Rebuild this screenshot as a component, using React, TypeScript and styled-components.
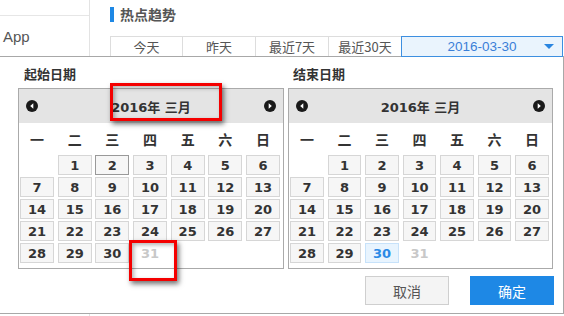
import React from "react";
import styled, { createGlobalStyle, css } from "styled-components";

const GlobalStyle = createGlobalStyle`
  html, body {
    margin: 0;
    padding: 0;
    background: #fff;
  }
  body {
    font-family: "Noto Sans", "Noto Sans CJK SC", sans-serif;
    color: #333;
  }
`;

const cjk = `"Noto Sans CJK SC", "Noto Sans", sans-serif`;
const calFont = `"DejaVu Sans", "Noto Sans CJK SC", sans-serif`;

const Page = styled.div`
  position: relative;
  width: 564px;
  height: 316px;
  overflow: hidden;
  background: #fff;
`;

const TopBar = styled.div`
  display: flex;
  height: 56px;
`;

const Sidebar = styled.div`
  width: 89px;
  border-right: 1px solid #e3e3e3;
  display: flex;
  flex-direction: column;
`;

const SideTop = styled.div`
  height: 15px;
  border-bottom: 1px solid #e6e6e6;
`;

const SideItem = styled.div`
  flex: 1;
  display: flex;
  align-items: center;
  padding-left: 3px;
  font-family: "Liberation Sans", sans-serif;
  font-size: 15px;
  color: #555;
`;

const Main = styled.div`
  flex: 1;
  display: flex;
  flex-direction: column;
  padding-left: 20px;
`;

const TitleRow = styled.div`
  height: 28px;
  display: flex;
  align-items: center;
  gap: 6px;
`;

const TitleBar = styled.span`
  width: 4px;
  height: 15px;
  background: #1e88e5;
`;

const Title = styled.span`
  font-family: ${cjk};
  font-size: 14px;
  font-weight: 700;
  color: #555;
`;

const TabRow = styled.div`
  margin-top: 8px;
  height: 20px;
  display: flex;
  align-items: flex-start;
`;

const Tab = styled.div<{ $first?: boolean }>`
  box-sizing: border-box;
  width: ${(p) => (p.$first ? 72 : 73)}px;
  height: 20px;
  border-top: 1px solid #ddd;
  border-left: 1px solid #ddd;
  display: flex;
  align-items: center;
  justify-content: center;
  font-family: ${cjk};
  font-size: 13px;
  color: #555;
`;

const DateBox = styled.div`
  position: relative;
  z-index: 1;
  box-sizing: border-box;
  width: 162px;
  height: 21px;
  border: 1px solid #3d8fe0;
  background: #eaf4fd;
  display: flex;
  align-items: center;
  justify-content: center;
  font-family: "Liberation Sans", sans-serif;
  font-size: 13.5px;
  color: #3a7fd8;
`;

const Caret = styled.span`
  position: absolute;
  right: 8px;
  top: 7px;
  width: 0;
  height: 0;
  border-left: 5px solid transparent;
  border-right: 5px solid transparent;
  border-top: 5px solid #2a85e0;
`;

const Popup = styled.div`
  box-sizing: border-box;
  width: 565px;
  height: 258px;
  margin-left: -1px;
  border: 1px solid #a8a8a8;
  background: #fff;
  padding: 0 0 0 18px;
  display: flex;
  flex-direction: column;
`;

const Pickers = styled.div`
  display: flex;
  gap: 4px;
`;

const PickerCol = styled.div<{ $w: number; $labelIndent: number }>`
  width: ${(p) => p.$w}px;
  display: flex;
  flex-direction: column;
  & > span {
    padding-left: ${(p) => p.$labelIndent}px;
  }
`;

const PickerLabel = styled.span`
  box-sizing: border-box;
  height: 31px;
  padding-top: 8px;
  line-height: 18px;
  font-family: ${cjk};
  font-size: 13px;
  font-weight: 700;
  color: #333;
`;

const Calendar = styled.div`
  box-sizing: border-box;
  height: 181px;
  border: 1px solid #aaa;
  display: flex;
  flex-direction: column;
`;

const CalHeader = styled.div`
  height: 34px;
  background: #e4e4e4;
  display: flex;
  align-items: center;
  justify-content: space-between;
  padding: 0 7px;
  font-family: ${calFont};
  font-size: 13px;
  font-weight: 700;
  color: #333;
`;

const Grid = styled.div`
  display: grid;
  grid-template-columns: repeat(7, 1fr);
  column-gap: 3.6px;
  padding: 0 3px 0 1px;
`;

const WeekRow = styled(Grid)`
  height: 32px;
  align-items: center;
`;

const WeekDay = styled.span`
  text-align: center;
  font-family: ${cjk};
  font-size: 14px;
  font-weight: 700;
  color: #333;
`;

const DayGrid = styled(Grid)`
  grid-auto-rows: 20px;
  row-gap: 2px;
`;

type DayKind = "normal" | "focus" | "selected" | "disabled";

const Day = styled.span<{ $kind: DayKind }>`
  box-sizing: border-box;
  display: flex;
  align-items: center;
  justify-content: center;
  font-family: ${calFont};
  font-size: 13px;
  font-weight: 700;
  color: #333;
  border: 1px solid #d6d6d6;
  background: #f6f6f6;
  ${(p) =>
    p.$kind === "focus" &&
    css`
      border-color: #999;
    `}
  ${(p) =>
    p.$kind === "selected" &&
    css`
      border-color: #c7e2fa;
      background: #e8f4fe;
      color: #2b8ae6;
    `}
  ${(p) =>
    p.$kind === "disabled" &&
    css`
      border-color: transparent;
      background: transparent;
      color: #c8c8c8;
    `}
`;

const Empty = styled.span``;

const ButtonRow = styled.div`
  margin-top: 7px;
  padding-right: 9px;
  display: flex;
  justify-content: flex-end;
  gap: 21px;
`;

const Button = styled.button<{ $primary?: boolean }>`
  box-sizing: border-box;
  width: 84px;
  height: 29px;
  border: 1px solid ${(p) => (p.$primary ? "#1e88e5" : "#cfcfcf")};
  background: ${(p) => (p.$primary ? "#1e88e5" : "#f4f4f4")};
  color: ${(p) => (p.$primary ? "#fff" : "#555")};
  font-family: ${cjk};
  font-size: 14px;
  padding: 0;
`;

const BottomStrip = styled.div`
  display: flex;
  height: 4px;
`;

const BottomSide = styled.div`
  width: 89px;
  border-right: 1px solid #e3e3e3;
`;

const Callout = styled.div<{ $x: number; $y: number; $w: number; $h: number }>`
  position: absolute;
  left: ${(p) => p.$x}px;
  top: ${(p) => p.$y}px;
  width: ${(p) => p.$w}px;
  height: ${(p) => p.$h}px;
  box-sizing: border-box;
  border: 3px solid #f40000;
  box-shadow: 2px 3px 5px rgba(0, 0, 0, 0.55),
    inset 2px 2px 4px rgba(0, 0, 0, 0.3);
  pointer-events: none;
`;

function NavIcon({ dir }: { dir: "prev" | "next" }) {
  return (
    <svg width="12" height="12" viewBox="0 0 12 12">
      <circle cx="6" cy="6" r="6" fill="#1a1a1a" />
      {dir === "prev" ? (
        <path d="M7.3 3.2 L4.2 6 L7.3 8.8 Z" fill="#fff" />
      ) : (
        <path d="M4.7 3.2 L7.8 6 L4.7 8.8 Z" fill="#fff" />
      )}
    </svg>
  );
}

const weekDays = ["一", "二", "三", "四", "五", "六", "日"];

interface MonthProps {
  focus?: number;
  selected?: number;
}

function Month({ focus, selected }: MonthProps) {
  const days = Array.from({ length: 31 }, (_, i) => i + 1);
  const kindOf = (d: number): DayKind => {
    if (d === 31) return "disabled";
    if (d === selected) return "selected";
    if (d === focus) return "focus";
    return "normal";
  };
  return (
    <Calendar>
      <CalHeader>
        <NavIcon dir="prev" />
        <span>2016年 三月</span>
        <NavIcon dir="next" />
      </CalHeader>
      <WeekRow>
        {weekDays.map((w) => (
          <WeekDay key={w}>{w}</WeekDay>
        ))}
      </WeekRow>
      <DayGrid>
        <Empty />
        {days.map((d) => (
          <Day key={d} $kind={kindOf(d)}>
            {d}
          </Day>
        ))}
      </DayGrid>
    </Calendar>
  );
}

const tabs = ["今天", "昨天", "最近7天", "最近30天"];

export default function App() {
  return (
    <Page>
      <GlobalStyle />
      <TopBar>
        <Sidebar>
          <SideTop />
          <SideItem>App</SideItem>
        </Sidebar>
        <Main>
          <TitleRow>
            <TitleBar />
            <Title>热点趋势</Title>
          </TitleRow>
          <TabRow>
            {tabs.map((t, i) => (
              <Tab key={t} $first={i === 0}>
                {t}
              </Tab>
            ))}
            <DateBox>
              2016-03-30
              <Caret />
            </DateBox>
          </TabRow>
        </Main>
      </TopBar>
      <Popup>
        <Pickers>
          <PickerCol $w={266} $labelIndent={6}>
            <PickerLabel>起始日期</PickerLabel>
            <Month focus={2} />
          </PickerCol>
          <PickerCol $w={265} $labelIndent={5}>
            <PickerLabel>结束日期</PickerLabel>
            <Month selected={30} />
          </PickerCol>
        </Pickers>
        <ButtonRow>
          <Button>取消</Button>
          <Button $primary>确定</Button>
        </ButtonRow>
      </Popup>
      <BottomStrip>
        <BottomSide />
      </BottomStrip>
      <Callout $x={110} $y={83} $w={112} $h={38} />
      <Callout $x={129} $y={240} $w={48} $h={41} />
    </Page>
  );
}
